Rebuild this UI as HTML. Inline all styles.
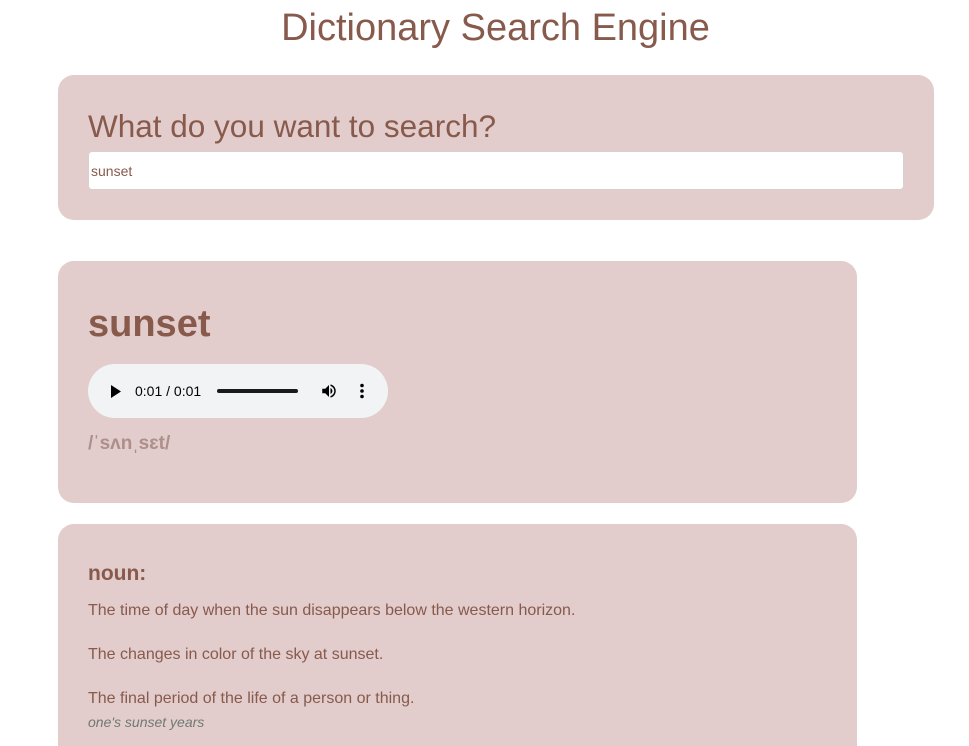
<!DOCTYPE html>
<html><head><style>
html,body{margin:0;height:746px;overflow:hidden}
body{background:#fff;font-family:"Liberation Sans",sans-serif;color:#875a4c;width:969px;position:relative}
h1{position:absolute;top:7px;left:0;width:991px;text-align:center;margin:0;font-weight:normal;font-size:38px;color:#875a4c}
.card{position:absolute;background:#e2cccc;border-radius:16px}
.q{position:absolute;left:30px;top:33px;font-size:31.5px;margin:0}
.inp{position:absolute;left:30px;top:76px;width:816px;height:39px;background:#fff;border:1px solid #d8d0d0;border-radius:4px;font-size:14px;color:#875a4c;line-height:38px;padding-left:2px;box-sizing:border-box}
.word{position:absolute;left:30px;top:42px;font-size:38px;font-weight:bold;margin:0}
.audio{position:absolute;left:30px;top:103px;width:300px;height:54px;border-radius:27px;background:#f1f3f4;color:#000;font-size:14px}
.ph{position:absolute;left:30px;top:172px;font-size:19px;font-weight:bold;color:#ad8f8b}
p{margin:0;position:absolute;left:30px;font-size:16px}
</style></head><body>
<h1>Dictionary Search Engine</h1>
<div class="card" style="left:58px;top:75px;width:876px;height:145px">
<div class="q">What do you want to search?</div>
<div class="inp">sunset</div>
</div>
<div class="card" style="left:58px;top:261px;width:799px;height:242px">
<div class="word">sunset</div>
<div class="audio">
<svg style="position:absolute;left:22px;top:21px" width="12" height="13"><path d="M1 0L11 6.5L1 13Z" fill="#000"/></svg>
<span style="position:absolute;left:47px;top:19px">0:01 / 0:01</span>
<div style="position:absolute;left:129px;top:25px;width:81px;height:4px;border-radius:2px;background:#1a1a1a"></div>
<svg style="position:absolute;left:232px;top:18px" width="18" height="18" viewBox="0 0 24 24"><path d="M3 9v6h4l5 5V4L7 9H3zm13.5 3c0-1.8-1-3.3-2.5-4v8c1.5-.7 2.5-2.2 2.5-4zM14 3.2v2.1c2.9.9 5 3.5 5 6.7s-2.1 5.8-5 6.7v2.1c4-.9 7-4.5 7-8.8s-3-7.9-7-8.8z" fill="#000"/></svg>
<svg style="position:absolute;left:271px;top:19px" width="6" height="16"><circle cx="3" cy="2.5" r="1.8"/><circle cx="3" cy="8" r="1.8"/><circle cx="3" cy="13.5" r="1.8"/></svg>
</div>
<div class="ph">/ˈsʌnˌsɛt/</div>
</div>
<div class="card" style="left:58px;top:524px;width:799px;height:240px">
<div style="position:absolute;left:30px;top:38px;font-size:21px;font-weight:bold">noun:</div>
<p style="top:78px">The time of day when the sun disappears below the western horizon.</p>
<p style="top:122px">The changes in color of the sky at sunset.</p>
<p style="top:166px">The final period of the life of a person or thing.</p>
<p style="top:190px;font-size:14px;font-style:italic;color:#6f7a72">one's sunset years</p>
</div>
</body></html>
